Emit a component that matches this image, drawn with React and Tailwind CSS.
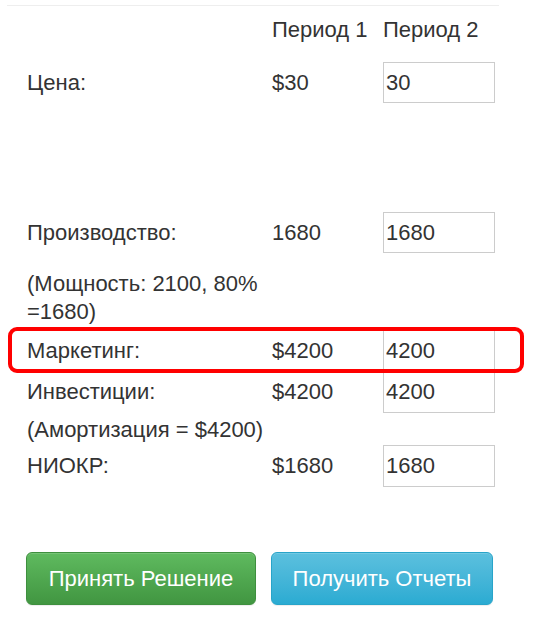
const ROW_INPUT = 'w-[112px] h-full border border-[#cccccc] bg-white px-[2px] text-[22px] text-[#333333] outline-none';

function Row({ label, p1, p2, h = 'h-[41px]', className = '' }) {
  return (
    <div className={`flex items-center ${h} ${className}`}>
      <div className="w-[245px]">{label}</div>
      <div className="w-[111px]">{p1}</div>
      <input className={ROW_INPUT} defaultValue={p2} />
    </div>
  );
}

export default function App() {
  return (
    <div
      className="w-[537px] h-[617px] bg-white text-[22px] leading-[28px] text-[#333333] overflow-hidden"
      style={{ fontFamily: '"Liberation Sans", Arial, sans-serif' }}
    >
      <div className="pt-[5px]">
        <div className="ml-[7px] w-[492px] border-t border-[#eeeeee]" />
      </div>

      <div className="pl-[27px]">
        {/* header */}
        <div className="flex mt-[10px] h-[28px]">
          <div className="w-[245px]" />
          <div className="w-[111px]">Период 1</div>
          <div>Период 2</div>
        </div>

        <Row label="Цена:" p1="$30" p2="30" className="mt-[18px]" />

        <Row label="Производство:" p1="1680" p2="1680" className="mt-[109px]" />
        <div className="mt-[17px]">
          <div>(Мощность: 2100, 80%</div>
          <div>=1680)</div>
        </div>

        <div className="relative mt-[4px]">
          <Row label="Маркетинг:" p1="$4200" p2="4200" />
          {/* highlight */}
          <div className="absolute left-[-19px] top-[-3px] w-[516px] h-[46px] border-[4px] border-[#ff0000] rounded-[9px] pointer-events-none" />
        </div>
        <Row label="Инвестиции:" p1="$4200" p2="4200" h="h-[42px]" />
        <div className="mt-[3px] h-[28px]">(Амортизация = $4200)</div>
        <Row label="НИОКР:" p1="$1680" p2="1680" h="h-[42px]" className="mt-[1px]" />

        <div className="flex gap-[15px] mt-[65px] ml-[-1px]">
          <button className="w-[230px] h-[53px] rounded-[6px] border border-[#3e8f3e] bg-gradient-to-b from-[#5fba5f] to-[#419641] text-white text-[22px] shadow-[inset_0_1px_0_rgba(255,255,255,0.15),0_1px_1px_rgba(0,0,0,0.075)]">
            Принять Решение
          </button>
          <button className="w-[222px] h-[53px] rounded-[6px] border border-[#28a4c9] bg-gradient-to-b from-[#5bc0de] to-[#2aabd2] text-white text-[22px] shadow-[inset_0_1px_0_rgba(255,255,255,0.15),0_1px_1px_rgba(0,0,0,0.075)]">
            Получить Отчеты
          </button>
        </div>
      </div>
    </div>
  );
}
